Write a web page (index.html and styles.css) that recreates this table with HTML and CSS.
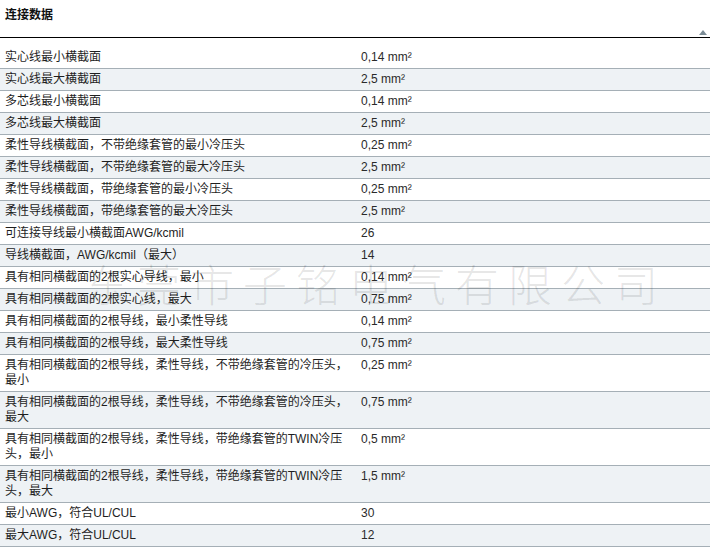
FILE: index.html
```html
<!DOCTYPE html>
<html lang="zh-CN">
<head>
<meta charset="utf-8">
<title>连接数据</title>
<link rel="stylesheet" href="styles.css">
</head>
<body>
<div class="panel">
  <div class="panel-head">
    <span class="panel-title">连接数据</span>
    <span class="toggle" aria-label="收起"></span>
  </div>
  <table class="data">
    <colgroup><col class="c-label"><col class="c-value"></colgroup>
    <tbody>
      <tr><td>实心线最小横截面</td><td>0,14 mm²</td></tr>
      <tr><td>实心线最大横截面</td><td>2,5 mm²</td></tr>
      <tr><td>多芯线最小横截面</td><td>0,14 mm²</td></tr>
      <tr><td>多芯线最大横截面</td><td>2,5 mm²</td></tr>
      <tr><td>柔性导线横截面，不带绝缘套管的最小冷压头</td><td>0,25 mm²</td></tr>
      <tr><td>柔性导线横截面，不带绝缘套管的最大冷压头</td><td>2,5 mm²</td></tr>
      <tr><td>柔性导线横截面，带绝缘套管的最小冷压头</td><td>0,25 mm²</td></tr>
      <tr><td>柔性导线横截面，带绝缘套管的最大冷压头</td><td>2,5 mm²</td></tr>
      <tr><td>可连接导线最小横截面AWG/kcmil</td><td>26</td></tr>
      <tr><td>导线横截面，AWG/kcmil（最大）</td><td>14</td></tr>
      <tr><td>具有相同横截面的2根实心导线，最小</td><td>0,14 mm²</td></tr>
      <tr><td>具有相同横截面的2根实心线，最大</td><td>0,75 mm²</td></tr>
      <tr><td>具有相同横截面的2根导线，最小柔性导线</td><td>0,14 mm²</td></tr>
      <tr><td>具有相同横截面的2根导线，最大柔性导线</td><td>0,75 mm²</td></tr>
      <tr><td>具有相同横截面的2根导线，柔性导线，不带绝缘套管的冷压头，最小</td><td>0,25 mm²</td></tr>
      <tr><td>具有相同横截面的2根导线，柔性导线，不带绝缘套管的冷压头，最大</td><td>0,75 mm²</td></tr>
      <tr><td>具有相同横截面的2根导线，柔性导线，带绝缘套管的TWIN冷压头，最小</td><td>0,5 mm²</td></tr>
      <tr><td>具有相同横截面的2根导线，柔性导线，带绝缘套管的TWIN冷压头，最大</td><td>1,5 mm²</td></tr>
      <tr><td>最小AWG，符合UL/CUL</td><td>30</td></tr>
      <tr><td>最大AWG，符合UL/CUL</td><td>12</td></tr>
    </tbody>
  </table>
  <div class="watermark" aria-hidden="true">东莞市子铭电气有限公司</div>
</div>
</body>
</html>
```
FILE: styles.css
```css
html, body {
  margin: 0;
  padding: 0;
  background: #ffffff;
}

.panel {
  position: relative;
  width: 710px;
  font-family: "Liberation Sans", "Noto Sans CJK SC", sans-serif;
  font-size: 12px;
  color: #1e1e1e;
}

.panel-head {
  box-sizing: border-box;
  height: 38px;
  padding: 8px 3px 0 5px;
  border-bottom: 1px solid #000000;
  display: flex;
  justify-content: space-between;
  align-items: flex-end;
}

.panel-title {
  align-self: flex-start;
  font-weight: bold;
  line-height: 15px;
  color: #111111;
}

.toggle {
  width: 0;
  height: 0;
  border-left: 4px solid transparent;
  border-right: 4px solid transparent;
  border-bottom: 5px solid #7b8c96;
  margin-bottom: 2px;
}

.data {
  width: 100%;
  margin-top: 9px;
  border-collapse: collapse;
  table-layout: fixed;
}

.c-label {
  width: 356px;
}

.data td {
  padding: 3px 5px;
  line-height: 15px;
  vertical-align: top;
  border-bottom: 1px solid #a5afb6;
}

.data td:first-child {
  padding-right: 0;
}

.data td:last-child {
  color: #2a2a2a;
}

.data tr:nth-child(even) td {
  background: #eef2f5;
}

.watermark {
  position: absolute;
  top: 259px;
  left: 84px;
  font-family: "Noto Sans CJK SC", sans-serif;
  font-size: 44px;
  font-weight: 300;
  line-height: 48px;
  letter-spacing: 9px;
  white-space: nowrap;
  color: rgba(0, 0, 0, 0.1);
  pointer-events: none;
}
```
